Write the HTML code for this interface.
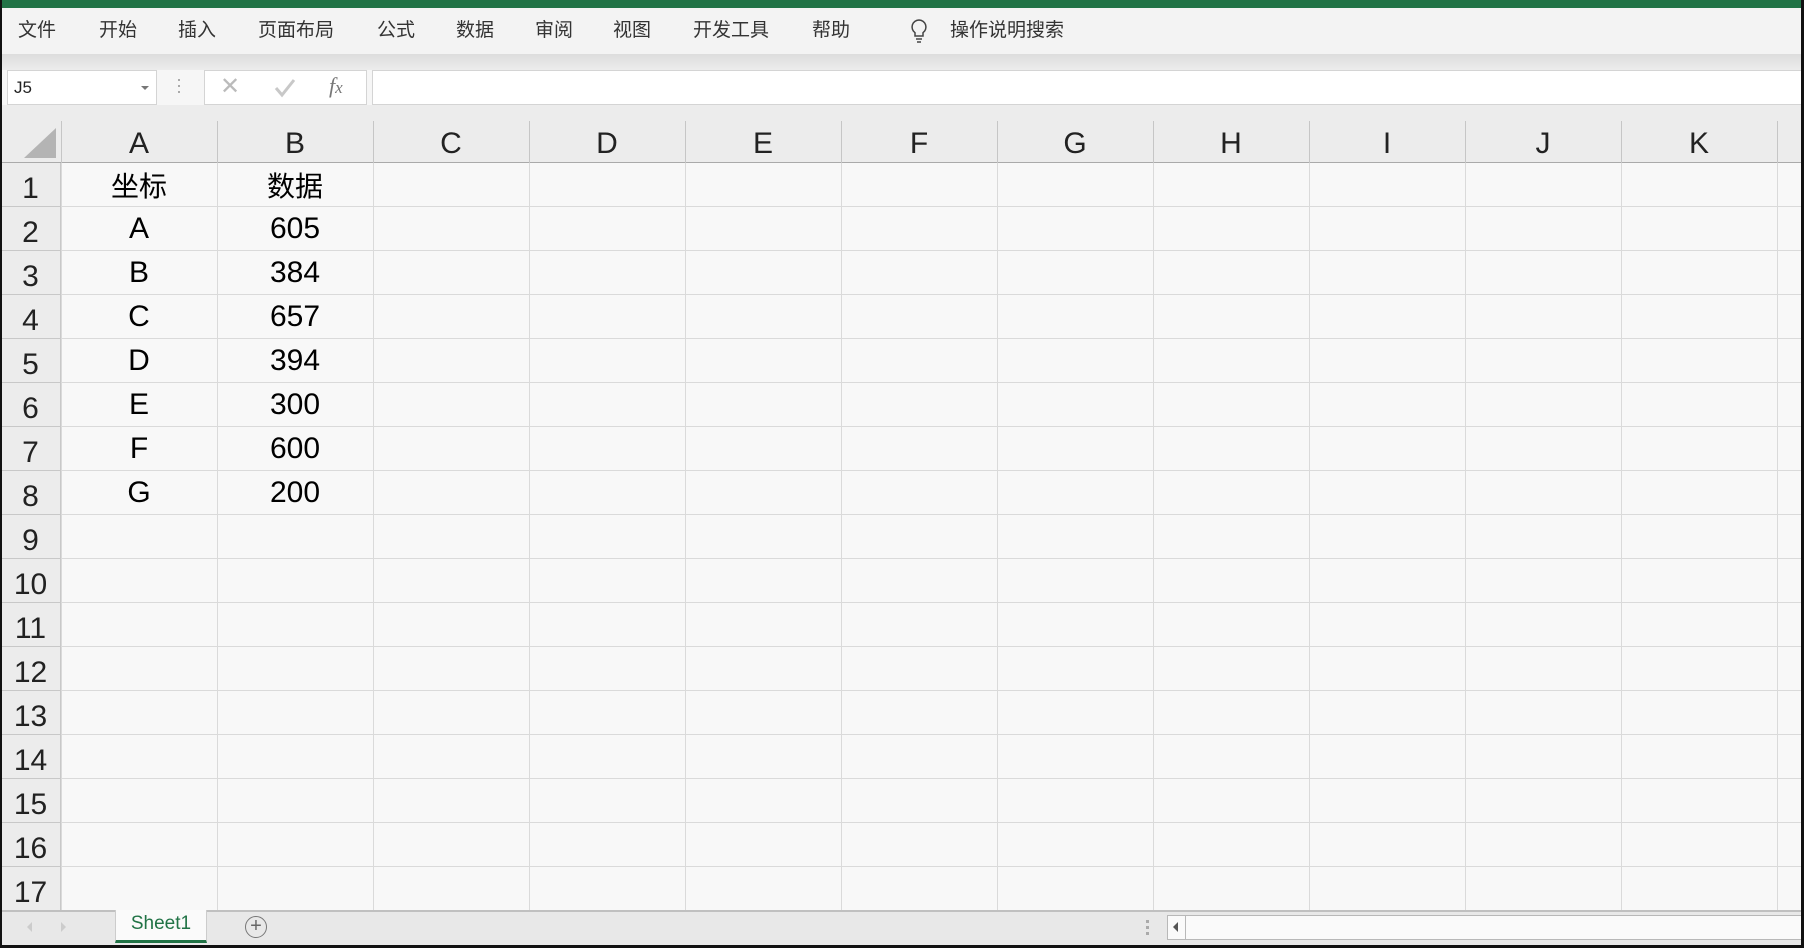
<!DOCTYPE html>
<html><head><meta charset="utf-8"><style>
*{margin:0;padding:0;box-sizing:border-box}
body{width:1804px;height:948px;overflow:hidden;background:#f8f8f8;position:relative;font-family:"Liberation Sans","Noto Sans CJK SC",sans-serif}
.a{position:absolute}
.menu span{position:absolute;top:17px;font-size:19px;color:#333;font-family:"Noto Sans CJK SC",sans-serif;line-height:24px}
.ch{position:absolute;top:124px;width:156px;text-align:center;font-size:30px;color:#222;line-height:40px}
.rh{position:absolute;left:0;width:61px;text-align:center;font-size:30px;color:#222;line-height:44px;padding-top:4px}
.c{position:absolute;width:156px;text-align:center;font-size:30px;color:#000;line-height:44px}
</style></head><body>
<div class="a" style="left:0;top:0;width:1804px;height:8px;background:#217346"></div>
<div class="a" style="left:0;top:8px;width:1804px;height:46px;background:#f3f3f3"></div>
<div class="a" style="left:0;top:54px;width:1804px;height:16px;background:linear-gradient(#dcdcdc,#ececec)"></div>
<div class="menu">
<span style="left:18px">文件</span><span style="left:99px">开始</span><span style="left:178px">插入</span><span style="left:258px">页面布局</span><span style="left:377px">公式</span><span style="left:456px">数据</span><span style="left:535px">审阅</span><span style="left:613px">视图</span><span style="left:693px">开发工具</span><span style="left:812px">帮助</span><span style="left:950px">操作说明搜索</span>
</div>
<svg class="a" style="left:908px;top:18px" width="22" height="26" viewBox="0 0 22 26"><path d="M11 2a7 7 0 0 0-4 12.7V18h8v-3.3A7 7 0 0 0 11 2z" fill="none" stroke="#444" stroke-width="1.5"/><path d="M8 21h6M9 24h4" stroke="#444" stroke-width="1.5"/></svg>
<div class="a" style="left:0;top:70px;width:1804px;height:35px;background:#f6f6f6"></div>
<div class="a" style="left:7px;top:70px;width:150px;height:35px;background:#fff;border:1px solid #d4d4d4;font-size:17px;line-height:33px;padding-left:6px;color:#222">J5</div>
<div class="a" style="left:141px;top:86px;width:0;height:0;border-left:4px solid transparent;border-right:4px solid transparent;border-top:4px solid #777"></div>
<div class="a" style="left:178px;top:79px;width:2px;height:2px;background:#aaa;box-shadow:0 6px #aaa,0 12px #aaa"></div>
<div class="a" style="left:204px;top:70px;width:163px;height:35px;background:#fff;border:1px solid #d4d4d4"></div>
<div class="a" style="left:220px;top:72px;font-size:24px;color:#bbb">✕</div>
<svg class="a" style="left:274px;top:78px" width="22" height="20" viewBox="0 0 22 20"><path d="M2 10l6 7L20 2" fill="none" stroke="#c8c8c8" stroke-width="3"/></svg>
<div class="a" style="left:329px;top:73px;font-size:22px;color:#777;font-style:italic;font-family:'Liberation Serif',serif">f<span style="font-size:17px">x</span></div>
<div class="a" style="left:372px;top:70px;width:1432px;height:35px;background:#fff;border:1px solid #d4d4d4"></div>
<div class="a" style="left:0;top:105px;width:1804px;height:58px;background:#ececec;border-bottom:1px solid #aaa"></div>
<div class="a" style="left:0;top:163px;width:61px;height:748px;background:#ececec;border-right:1px solid #c8c8c8"></div>
<svg class="a" style="left:22px;top:126px" width="36" height="34"><polygon points="34,2 34,32 2,32" fill="#b4b4b4"/></svg>
<div class="a" style="left:61px;top:121px;width:1743px;height:42px;background:repeating-linear-gradient(90deg,#c6c6c6 0 1px,transparent 1px 156px)"></div>
<div class="a" style="left:61px;top:163px;width:1743px;height:748px;background:repeating-linear-gradient(90deg,#dadada 0 1px,transparent 1px 156px),repeating-linear-gradient(180deg,transparent 0 43px,#dadada 43px 44px)"></div>
<div class="a" style="left:0;top:163px;width:61px;height:748px;background:repeating-linear-gradient(180deg,transparent 0 43px,#c8c8c8 43px 44px)"></div>
<div class="ch" style="left:61px">A</div><div class="ch" style="left:217px">B</div><div class="ch" style="left:373px">C</div><div class="ch" style="left:529px">D</div><div class="ch" style="left:685px">E</div><div class="ch" style="left:841px">F</div><div class="ch" style="left:997px">G</div><div class="ch" style="left:1153px">H</div><div class="ch" style="left:1309px">I</div><div class="ch" style="left:1465px">J</div><div class="ch" style="left:1621px">K</div>
<div class="rh" style="top:163px">1</div><div class="rh" style="top:207px">2</div><div class="rh" style="top:251px">3</div><div class="rh" style="top:295px">4</div><div class="rh" style="top:339px">5</div><div class="rh" style="top:383px">6</div><div class="rh" style="top:427px">7</div><div class="rh" style="top:471px">8</div><div class="rh" style="top:515px">9</div><div class="rh" style="top:559px">10</div><div class="rh" style="top:603px">11</div><div class="rh" style="top:647px">12</div><div class="rh" style="top:691px">13</div><div class="rh" style="top:735px">14</div><div class="rh" style="top:779px">15</div><div class="rh" style="top:823px">16</div><div class="rh" style="top:867px">17</div>
<div class="c" style="left:61px;top:163px;font-family:'Noto Sans CJK SC',sans-serif;font-size:28px">坐标</div>
<div class="c" style="left:217px;top:163px;font-family:'Noto Sans CJK SC',sans-serif;font-size:28px">数据</div>
<div class="c" style="left:61px;top:207px">A</div><div class="c" style="left:217px;top:207px">605</div>
<div class="c" style="left:61px;top:251px">B</div><div class="c" style="left:217px;top:251px">384</div>
<div class="c" style="left:61px;top:295px">C</div><div class="c" style="left:217px;top:295px">657</div>
<div class="c" style="left:61px;top:339px">D</div><div class="c" style="left:217px;top:339px">394</div>
<div class="c" style="left:61px;top:383px">E</div><div class="c" style="left:217px;top:383px">300</div>
<div class="c" style="left:61px;top:427px">F</div><div class="c" style="left:217px;top:427px">600</div>
<div class="c" style="left:61px;top:471px">G</div><div class="c" style="left:217px;top:471px">200</div>
<div class="a" style="left:0;top:910px;width:1804px;height:38px;background:#e8e8e8;border-top:2px solid #c0c0c0"></div>
<div class="a" style="left:27px;top:922px;border-top:5px solid transparent;border-bottom:5px solid transparent;border-right:5px solid #ccc"></div>
<div class="a" style="left:61px;top:922px;border-top:5px solid transparent;border-bottom:5px solid transparent;border-left:5px solid #ccc"></div>
<div class="a" style="left:115px;top:910px;width:92px;height:33px;background:#fafafa;border-bottom:3px solid #217346;border-left:1px solid #ccc;border-right:1px solid #ccc;text-align:center;font-size:19px;line-height:28px;color:#217346">Sheet1</div>
<div class="a" style="left:245px;top:916px;width:22px;height:22px;border:1.5px solid #777;border-radius:50%;text-align:center;line-height:18px;font-size:20px;color:#666">+</div>
<div class="a" style="left:1146px;top:920px;width:3px;height:3px;background:#aaa;box-shadow:0 6px #aaa,0 12px #aaa"></div>
<div class="a" style="left:1167px;top:915px;width:637px;height:25px;background:#fafafa;border:1px solid #b8b8b8"></div>
<div class="a" style="left:1167px;top:915px;width:19px;height:25px;border-right:1px solid #b8b8b8"></div>
<div class="a" style="left:1173px;top:922px;border-top:5px solid transparent;border-bottom:5px solid transparent;border-right:5px solid #555"></div>
<div class="a" style="left:0;top:0;width:2px;height:948px;background:#111"></div>
<div class="a" style="left:1801px;top:0;width:3px;height:948px;background:#111"></div>
<div class="a" style="left:0;top:945px;width:1804px;height:3px;background:#111"></div>
</body></html>
